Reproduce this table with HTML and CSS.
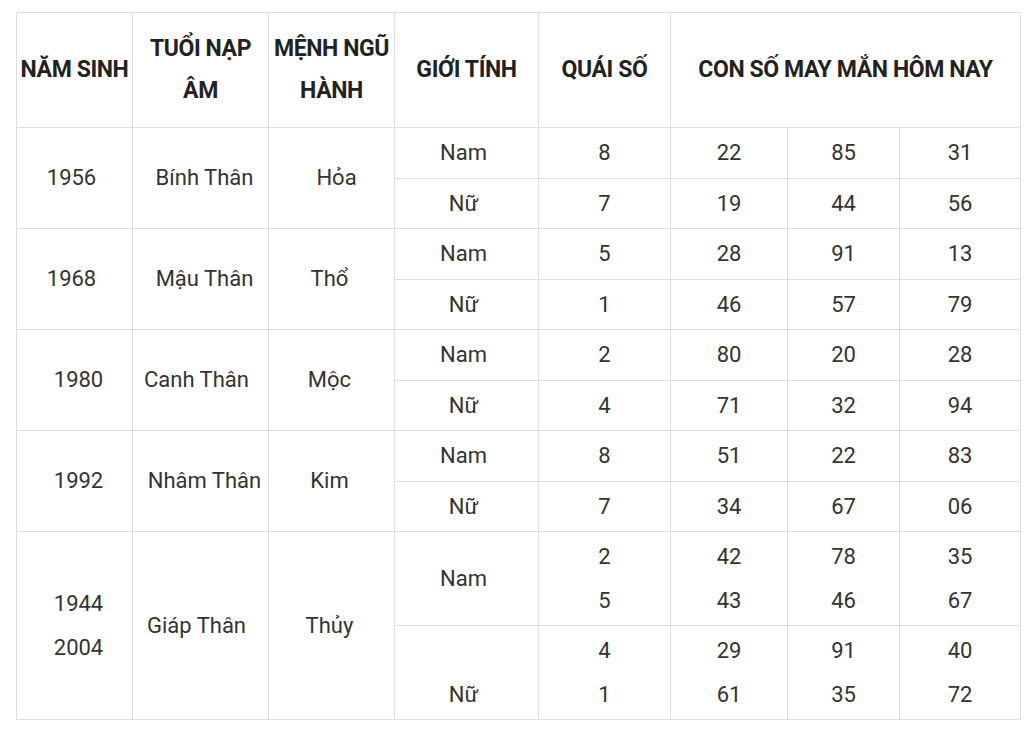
FILE: index.html
```html
<!DOCTYPE html>
<html lang="vi">
<head>
<meta charset="utf-8">
<title>Con số may mắn</title>
<link rel="stylesheet" href="styles.css">
</head>
<body>
<table class="lucky">
  <colgroup>
    <col class="c1"><col class="c2"><col class="c3"><col class="c4"><col class="c5"><col class="c6"><col class="c7"><col class="c8">
  </colgroup>
  <thead>
    <tr>
      <th>NĂM SINH</th>
      <th>TUỔI NẠP ÂM</th>
      <th>MỆNH NGŨ HÀNH</th>
      <th>GIỚI TÍNH</th>
      <th>QUÁI SỐ</th>
      <th colspan="3">CON SỐ MAY MẮN HÔM NAY</th>
    </tr>
  </thead>
  <tbody>
    <tr><td rowspan="2" class="yl">1956</td><td rowspan="2" class="nr">Bính Thân</td><td rowspan="2" class="mr">Hỏa</td><td class="g">Nam</td><td>8</td><td>22</td><td>85</td><td>31</td></tr>
    <tr><td class="g">Nữ</td><td>7</td><td>19</td><td>44</td><td>56</td></tr>
    <tr><td rowspan="2" class="yl">1968</td><td rowspan="2" class="nr">Mậu Thân</td><td rowspan="2" class="m">Thổ</td><td class="g">Nam</td><td>5</td><td>28</td><td>91</td><td>13</td></tr>
    <tr><td class="g">Nữ</td><td>1</td><td>46</td><td>57</td><td>79</td></tr>
    <tr><td rowspan="2" class="yr">1980</td><td rowspan="2" class="nl">Canh Thân</td><td rowspan="2" class="m">Mộc</td><td class="g">Nam</td><td>2</td><td>80</td><td>20</td><td>28</td></tr>
    <tr><td class="g">Nữ</td><td>4</td><td>71</td><td>32</td><td>94</td></tr>
    <tr><td rowspan="2" class="yr">1992</td><td rowspan="2" class="nr">Nhâm Thân</td><td rowspan="2" class="m">Kim</td><td class="g">Nam</td><td>8</td><td>51</td><td>22</td><td>83</td></tr>
    <tr><td class="g">Nữ</td><td>7</td><td>34</td><td>67</td><td>06</td></tr>
    <tr><td rowspan="2" class="yr">1944<br>2004</td><td rowspan="2" class="nl">Giáp Thân</td><td rowspan="2" class="m">Thủy</td><td class="g">Nam</td><td>2<br>5</td><td>42<br>43</td><td>78<br>46</td><td>35<br>67</td></tr>
    <tr><td class="g"><br>Nữ</td><td>4<br>1</td><td>29<br>61</td><td>91<br>35</td><td>40<br>72</td></tr>
  </tbody>
</table>
</body>
</html>
```
FILE: styles.css
```css
html, body {
  margin: 0;
  padding: 0;
  background: #fff;
}
body {
  padding: 12px 15px 0 16px;
  font-family: Roboto, "Liberation Sans", Arial, sans-serif;
  color: #333;
}
.lucky {
  border-collapse: collapse;
  table-layout: fixed;
  width: 1004px;
}
.c1 { width: 116px; }
.c2 { width: 136px; }
.c3 { width: 126px; }
.c4 { width: 144px; }
.c5 { width: 132px; }
.c6 { width: 117px; }
.c7 { width: 112px; }
.c8 { width: 121px; }
.lucky th, .lucky td {
  border: 1px solid #dedede;
  text-align: center;
  vertical-align: middle;
}
.lucky th {
  font-size: 23px;
  font-weight: 700;
  color: #222;
  line-height: 42px;
  padding: 15px 1px;
  letter-spacing: -0.4px;
}
.lucky td {
  font-size: 22px;
  line-height: 43.5px;
  padding: 3px 4px;
}
.lucky td.g { padding-left: 1px; padding-right: 7px; }
.lucky td.m { padding-left: 2px; padding-right: 6px; }
.lucky td.mr { padding-left: 10px; padding-right: 0; }
.lucky td.yl { padding-left: 1px; padding-right: 7px; }
.lucky td.yr { padding-left: 8px; padding-right: 0; }
.lucky td.nr { padding-left: 8px; padding-right: 0; }
.lucky td.nl { padding-left: 0; padding-right: 8px; }
```
